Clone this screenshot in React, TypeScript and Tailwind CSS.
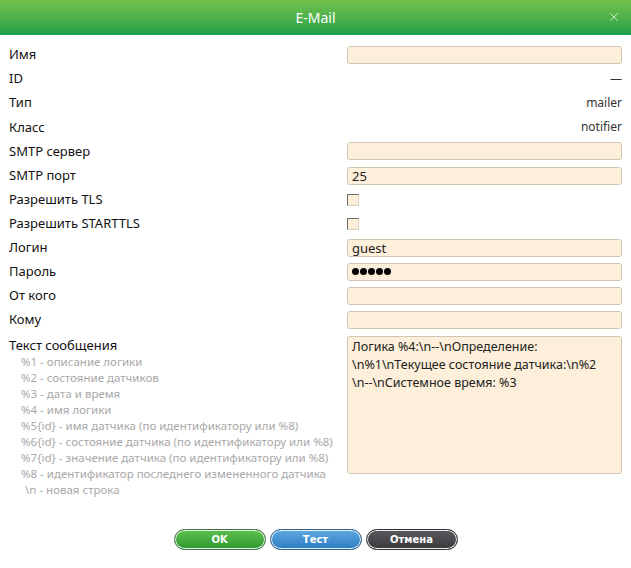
import { X } from 'lucide-react';

const font = { fontFamily: '"Noto Sans", "Open Sans", sans-serif' };

const hints = [
  '%1 - описание логики',
  '%2 - состояние датчиков',
  '%3 - дата и время',
  '%4 - имя логики',
  '%5{id} - имя датчика (по идентификатору или %8)',
  '%6{id} - состояние датчика (по идентификатору или %8)',
  '%7{id} - значение датчика (по идентификатору или %8)',
  '%8 - идентификатор последнего измененного датчика',
];

function Field({ value = '' }: { value?: string }) {
  return (
    <div className="h-[18px] w-full rounded-[3px] border border-[#cfc6b6] bg-[#fdefd9] px-[4px] text-[13px] leading-[16px] text-[#222]">
      {value}
    </div>
  );
}

function Check() {
  return (
    <div className="h-[12px] w-[12px] border border-t-[#6b6b6b] border-l-[#6b6b6b] border-r-[#d8d0c0] border-b-[#d8d0c0] bg-[#fdefd9]" />
  );
}

function Row({ label, children }: { label: string; children?: React.ReactNode }) {
  return (
    <div className="flex h-[24.1px] items-center">
      <div className="flex-1 text-[13px] text-[#111]">{label}</div>
      <div className="flex w-[275px] items-center justify-end">{children}</div>
    </div>
  );
}

export default function App() {
  return (
    <div className="flex h-[568px] w-[631px] flex-col bg-white" style={font}>
      <div className="relative flex h-[35px] items-center justify-center bg-gradient-to-b from-[#72c24c] to-[#17a04a]">
        <span className="text-[14px] text-white">E-Mail</span>
        <X className="absolute right-[10px] top-[10px] h-[14px] w-[14px] text-[#d8f5d0]" strokeWidth={1.5} />
      </div>

      <div className="flex flex-col px-[9px] pt-[8px]">
        <Row label="Имя"><Field /></Row>
        <Row label="ID"><span className="text-[12px] text-[#333]">—</span></Row>
        <Row label="Тип"><span className="text-[12px] text-[#333]">mailer</span></Row>
        <Row label="Класс"><span className="text-[12px] text-[#333]">notifier</span></Row>
        <Row label="SMTP сервер"><Field /></Row>
        <Row label="SMTP порт"><Field value="25" /></Row>
        <Row label="Разрешить TLS"><div className="w-full"><Check /></div></Row>
        <Row label="Разрешить STARTTLS"><div className="w-full"><Check /></div></Row>
        <Row label="Логин"><Field value="guest" /></Row>
        <Row label="Пароль">
          <div className="flex h-[18px] w-full items-center gap-[1px] rounded-[3px] border border-[#cfc6b6] bg-[#fdefd9] px-[4px]">
            {[0, 1, 2, 3, 4].map((i) => (
              <span key={i} className="h-[7px] w-[7px] rounded-full bg-black" />
            ))}
          </div>
        </Row>
        <Row label="От кого"><Field /></Row>
        <Row label="Кому"><Field /></Row>

        <div className="mt-[4px] flex">
          <div className="flex-1">
            <div className="text-[13px] leading-[18px] text-[#111]">Текст сообщения</div>
            <div className="pl-[12px] text-[11.5px] leading-[16px] text-[#a8a8a8]">
              {hints.map((h) => (
                <div key={h}>{h}</div>
              ))}
              <div className="pl-[4px]">\n - новая строка</div>
            </div>
          </div>
          <div className="h-[138px] w-[275px] rounded-[3px] border border-[#cfc6b6] bg-[#fdefd9] px-[4px] py-[1px] text-[12.5px] leading-[18px] text-[#222]">
            Логика %4:\n--\nОпределение:
            <br />
            \n%1\nТекущее состояние датчика:\n%2
            <br />
            \n--\nСистемное время: %3
          </div>
        </div>
      </div>

      <div className="mt-[31px] flex justify-center gap-[4px]" style={{ fontFamily: '"DejaVu Sans", sans-serif' }}>
        <button className="h-[21px] w-[92px] rounded-full border border-[#3f6f45] bg-gradient-to-b from-[#5dc04c] to-[#2a9a30] text-[10px] font-bold text-white shadow-[inset_0_0_0_1px_#e8f5e8]">
          OK
        </button>
        <button className="h-[21px] w-[92px] rounded-full border border-[#34607f] bg-gradient-to-b from-[#5fa9e0] to-[#2b7cc4] text-[10px] font-bold text-white shadow-[inset_0_0_0_1px_#e6f0f8]">
          Тест
        </button>
        <button className="h-[21px] w-[92px] rounded-full border border-[#333] bg-gradient-to-b from-[#5a5a5e] to-[#3a3a3e] text-[10px] font-bold text-white shadow-[inset_0_0_0_1px_#eee]">
          Отмена
        </button>
      </div>
    </div>
  );
}
